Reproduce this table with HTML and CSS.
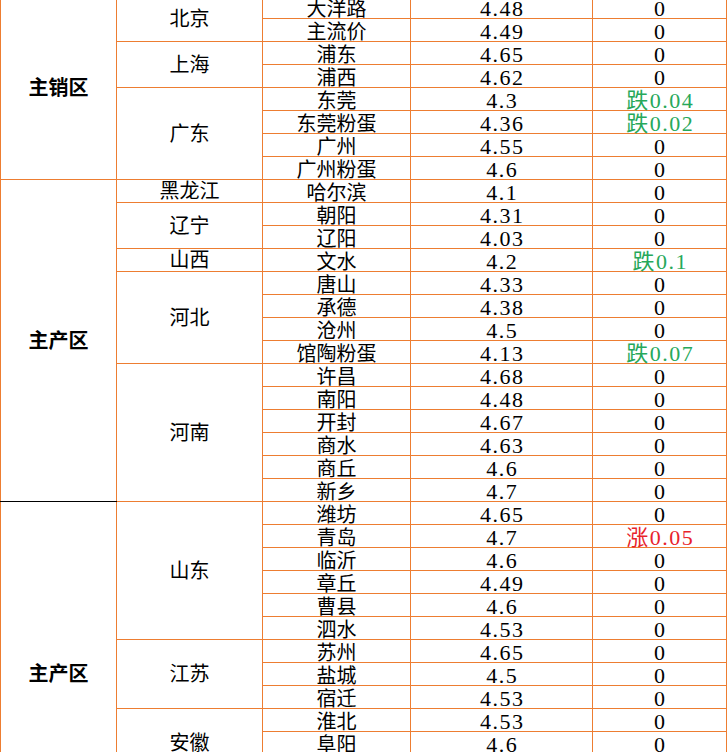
FILE: index.html
```html
<!DOCTYPE html>
<html lang="zh-CN">
<head>
<meta charset="utf-8">
<title>鸡蛋价格</title>
<link rel="stylesheet" href="styles.css">
</head>
<body>
<table class="price">
<colgroup>
<col class="c1"><col class="c2"><col class="c3"><col class="c4"><col class="c5">
</colgroup>
<tbody>
<tr><td class="area" rowspan="8">主销区</td><td class="prov" rowspan="2">北京</td><td class="city">大洋路</td><td class="num">4.48</td><td class="chg">0</td></tr>
<tr><td class="city">主流价</td><td class="num">4.49</td><td class="chg">0</td></tr>
<tr><td class="prov" rowspan="2">上海</td><td class="city">浦东</td><td class="num">4.65</td><td class="chg">0</td></tr>
<tr><td class="city">浦西</td><td class="num">4.62</td><td class="chg">0</td></tr>
<tr><td class="prov" rowspan="4">广东</td><td class="city">东莞</td><td class="num">4.3</td><td class="chg down">跌0.04</td></tr>
<tr><td class="city">东莞粉蛋</td><td class="num">4.36</td><td class="chg down">跌0.02</td></tr>
<tr><td class="city">广州</td><td class="num">4.55</td><td class="chg">0</td></tr>
<tr><td class="city">广州粉蛋</td><td class="num">4.6</td><td class="chg">0</td></tr>

<tr><td class="area sep-below" rowspan="14">主产区</td><td class="prov">黑龙江</td><td class="city">哈尔滨</td><td class="num">4.1</td><td class="chg">0</td></tr>
<tr><td class="prov" rowspan="2">辽宁</td><td class="city">朝阳</td><td class="num">4.31</td><td class="chg">0</td></tr>
<tr><td class="city">辽阳</td><td class="num">4.03</td><td class="chg">0</td></tr>
<tr><td class="prov">山西</td><td class="city">文水</td><td class="num">4.2</td><td class="chg down">跌0.1</td></tr>
<tr><td class="prov" rowspan="4">河北</td><td class="city">唐山</td><td class="num">4.33</td><td class="chg">0</td></tr>
<tr><td class="city">承德</td><td class="num">4.38</td><td class="chg">0</td></tr>
<tr><td class="city">沧州</td><td class="num">4.5</td><td class="chg">0</td></tr>
<tr><td class="city">馆陶粉蛋</td><td class="num">4.13</td><td class="chg down">跌0.07</td></tr>
<tr><td class="prov" rowspan="6">河南</td><td class="city">许昌</td><td class="num">4.68</td><td class="chg">0</td></tr>
<tr><td class="city">南阳</td><td class="num">4.48</td><td class="chg">0</td></tr>
<tr><td class="city">开封</td><td class="num">4.67</td><td class="chg">0</td></tr>
<tr><td class="city">商水</td><td class="num">4.63</td><td class="chg">0</td></tr>
<tr><td class="city">商丘</td><td class="num">4.6</td><td class="chg">0</td></tr>
<tr><td class="city">新乡</td><td class="num">4.7</td><td class="chg">0</td></tr>

<tr><td class="area sep-above" rowspan="15">主产区</td><td class="prov" rowspan="6">山东</td><td class="city">潍坊</td><td class="num">4.65</td><td class="chg">0</td></tr>
<tr><td class="city">青岛</td><td class="num">4.7</td><td class="chg up">涨0.05</td></tr>
<tr><td class="city">临沂</td><td class="num">4.6</td><td class="chg">0</td></tr>
<tr><td class="city">章丘</td><td class="num">4.49</td><td class="chg">0</td></tr>
<tr><td class="city">曹县</td><td class="num">4.6</td><td class="chg">0</td></tr>
<tr><td class="city">泗水</td><td class="num">4.53</td><td class="chg">0</td></tr>
<tr><td class="prov" rowspan="3">江苏</td><td class="city">苏州</td><td class="num">4.65</td><td class="chg">0</td></tr>
<tr><td class="city">盐城</td><td class="num">4.5</td><td class="chg">0</td></tr>
<tr><td class="city">宿迁</td><td class="num">4.53</td><td class="chg">0</td></tr>
<tr><td class="prov" rowspan="3">安徽</td><td class="city">淮北</td><td class="num">4.53</td><td class="chg">0</td></tr>
<tr><td class="city">阜阳</td><td class="num">4.6</td><td class="chg">0</td></tr>
<tr><td class="city">宿州</td><td class="num">4.6</td><td class="chg">0</td></tr>
<tr><td class="prov" rowspan="3">湖北</td><td class="city">武汉</td><td class="num">4.6</td><td class="chg">0</td></tr>
<tr><td class="city">孝感</td><td class="num">4.5</td><td class="chg">0</td></tr>
<tr><td class="city">荆门</td><td class="num">4.5</td><td class="chg">0</td></tr>
</tbody>
</table>
</body>
</html>
```
FILE: styles.css
```css
html, body {
  margin: 0;
  padding: 0;
  background: #ffffff;
}
body {
  font-family: "Liberation Serif", "Noto Sans CJK SC", serif;
  color: #000000;
}
.price {
  border-collapse: collapse;
  table-layout: fixed;
  width: 726px;
  margin-top: -5px;
}
.c1 { width: 116px; }
.c2 { width: 146px; }
.c3 { width: 148px; }
.c4 { width: 182px; }
.c5 { width: 134px; }
.price td {
  border: 1px solid #ED7D31;
  height: 22px;
  padding: 0;
  text-align: center;
  vertical-align: bottom;
  font-size: 20px;
  line-height: 18px;
  white-space: nowrap;
}
.price td.area,
.price td.prov {
  vertical-align: middle;
  line-height: 22px;
}
.price td.area {
  font-weight: bold;
}
.price td.num,
.price td.chg {
  font-size: 22px;
  letter-spacing: 1.5px;
  padding-left: 1.5px;
}
.price td.sep-below { border-bottom-color: #000000; }
.price td.sep-above { border-top-color: #000000; }
.down { color: #27a85a; }
.up { color: #e8232b; }
```
